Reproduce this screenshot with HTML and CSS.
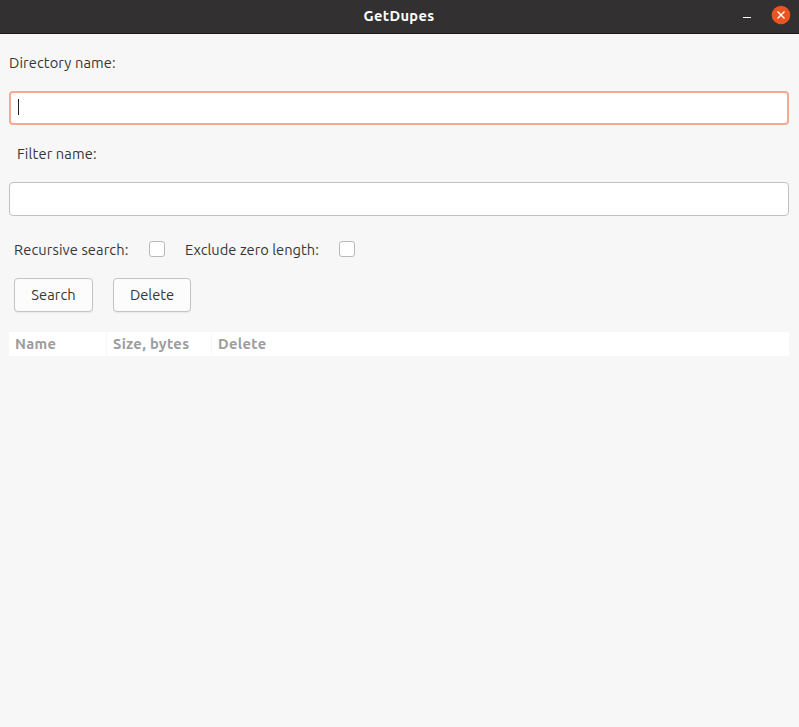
FILE: index.html
```html
<!DOCTYPE html>
<html lang="en">
<head>
<meta charset="utf-8">
<title>GetDupes</title>
<link rel="stylesheet" href="styles.css">
</head>
<body>
<header class="titlebar">
  <h1 class="title">GetDupes</h1>
  <div class="controls">
    <button class="control" aria-label="Minimize"><svg width="8" height="18" viewBox="0 0 8 18"><path d="M0 11.5h8" stroke="#fff"/></svg></button>
    <button class="control" aria-label="Close"><svg width="20" height="20" viewBox="0 0 20 20"><circle cx="10" cy="10" r="9.3" fill="#e95420"/><path d="M6.5 6.5l7 7m0-7l-7 7" stroke="#fff" stroke-width="1.4"/></svg></button>
  </div>
</header>
<main class="content">
  <label class="label">Directory name:</label>
  <div class="entry focused"><span class="caret"></span></div>
  <label class="label filter-label">Filter name:</label>
  <div class="entry"></div>
  <div class="options">
    <span class="recursive">Recursive search:</span><span class="check"></span>
    <span class="exclude">Exclude zero length:</span><span class="check"></span>
  </div>
  <div class="actions">
    <button class="button search">Search</button>
    <button class="button delete">Delete</button>
  </div>
  <div class="table-head">
    <div class="cell">Name</div>
    <div class="cell">Size, bytes</div>
    <div class="cell">Delete</div>
  </div>
</main>
</body>
</html>
```
FILE: styles.css
```css
* { box-sizing: border-box; }
body {
  margin: 0;
  height: 727px;
  overflow: hidden;
  background: #f7f7f7;
  color: #363636;
  font: 14.667px/20px Ubuntu, "Noto Sans", sans-serif;
  letter-spacing: .1px;
  white-space: nowrap;
}
.titlebar {
  display: grid;
  grid-template-columns: 1fr auto 1fr;
  height: 34px;
  padding-right: 1px;
  background: #323030;
  border-bottom: 1px solid #1d1718;
  color: #fff;
}
.title { grid-column: 2; margin: 0; font-size: 14.667px; line-height: 32px; font-weight: 700; letter-spacing: .36px; }
.controls { display: flex; justify-content: flex-end; align-items: flex-start; gap: 20px; padding: 5px 7px 0 0; }
.control { padding: 0; border: 0; background: none; height: 20px; }
.control svg { display: block; }
.content { padding: 19px 10px 0 9px; }
.label { display: block; height: 20px; }
.filter-label { margin-top: 19px; padding-left: 8px; letter-spacing: .14px; }
.entry { height: 34px; margin-top: 18px; background: #fff; border: 1px solid #c1c1c1; border-radius: 4px; }
.focused { border: 2px solid #f4aa90; padding: 6px 7px; }
.caret { display: block; width: 1px; height: 16px; background: #222; }
.options { display: flex; height: 20px; margin: 24px 0 0 5px; }
.recursive { width: 135px; }
.exclude { width: 154px; margin-left: 20px; letter-spacing: .03px; }
.check { width: 16px; height: 16px; margin-top: 1px; background: #fff; border: 1px solid #b9b9b9; border-radius: 3px; }
.actions { display: flex; gap: 20px; margin: 18px 0 0 5px; }
.button { height: 34px; padding: 0 0 1px; font: inherit; letter-spacing: inherit; color: inherit; background: #fcfcfc; border: 1px solid #c4c4c4; border-radius: 4px; box-shadow: 0 1px 1px #e8e8e8; }
.search { width: 79px; }
.delete { width: 78px; letter-spacing: 0; }
.table-head { display: grid; grid-template-columns: 98px 105px 1fr; height: 24px; margin-top: 20px; background: #fff; color: #9c9c9c; font-weight: 700; line-height: 23px; letter-spacing: .33px; }
.cell { padding-left: 6px; border-right: 1px solid #f7f7f7; }
.cell:last-child { border-right: 0; }
```
